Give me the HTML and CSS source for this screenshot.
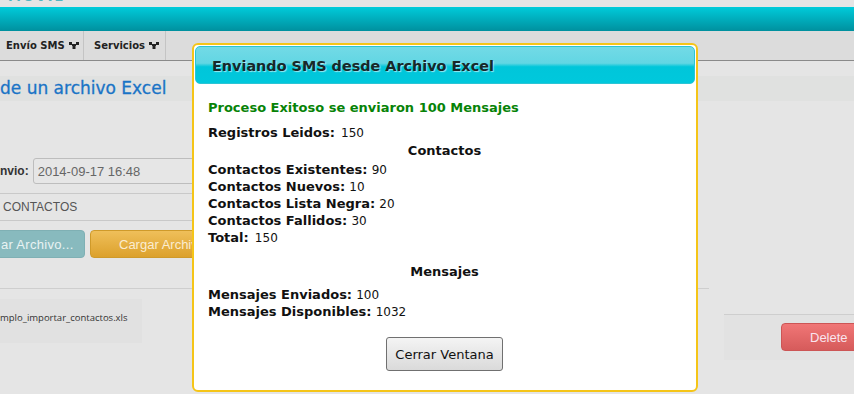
FILE: index.html
```html
<!DOCTYPE html>
<html lang="es">
<head>
  <meta charset="UTF-8" />
  <meta name="viewport" content="width=device-width, initial-scale=1.0"/>
  <title>Enviar SMS desde un archivo Excel</title>
  <link rel="stylesheet" href="styles.css">
</head>
<body>

  <div class="brand"><span>MOVIL</span></div>
  <div class="topbar"></div>

  <nav class="menu">
    <a class="menu-item">Envío SMS
      <svg class="caret" width="10" height="7" viewBox="0 0 10 7"><rect x="0" y="0" width="3" height="3"/><rect x="7" y="0" width="3" height="3"/><rect x="3" y="2" width="4" height="2"/><rect x="3.5" y="4" width="3" height="3"/></svg>
    </a>
    <a class="menu-item">Servicios
      <svg class="caret" width="10" height="7" viewBox="0 0 10 7"><rect x="0" y="0" width="3" height="3"/><rect x="7" y="0" width="3" height="3"/><rect x="3" y="2" width="4" height="2"/><rect x="3.5" y="4" width="3" height="3"/></svg>
    </a>
  </nav>

  <h2 class="page-title">de un archivo Excel</h2>

  <div class="form">
    <div class="field-row">
      <label>nvio:</label>
      <input class="field" type="text" value="2014-09-17 16:48">
    </div>
    <div class="section-row">CONTACTOS</div>
    <div class="button-row">
      <button class="btn btn-teal">ar Archivo...</button>
      <button class="btn btn-orange">Cargar Archivo</button>
    </div>
  </div>

  <div class="files">
    <div class="file-list">
      <div class="file-item">mplo_importar_contactos.xls</div>
    </div>
    <div class="file-actions">
      <button class="btn btn-red">Delete</button>
    </div>
  </div>

  <div class="modal">
    <div class="modal-header">Enviando SMS desde Archivo Excel</div>
    <div class="modal-body">
      <p class="success">Proceso Exitoso se enviaron 100 Mensajes</p>
      <p class="row"><b>Registros Leidos:</b> <span class="val wide">150</span></p>

      <h4 class="group first">Contactos</h4>
      <p class="row"><b>Contactos Existentes:</b> <span class="val">90</span></p>
      <p class="row"><b>Contactos Nuevos:</b> <span class="val">10</span></p>
      <p class="row"><b>Contactos Lista Negra:</b> <span class="val">20</span></p>
      <p class="row"><b>Contactos Fallidos:</b> <span class="val">30</span></p>
      <p class="row"><b>Total:</b> <span class="val wide">150</span></p>

      <h4 class="group">Mensajes</h4>
      <p class="row"><b>Mensajes Enviados:</b> <span class="val">100</span></p>
      <p class="row"><b>Mensajes Disponibles:</b> <span class="val">1032</span></p>

      <div class="modal-footer">
        <button class="btn-close">Cerrar Ventana</button>
      </div>
    </div>
  </div>

</body>
</html>
```

FILE: styles.css
```css
body {
  margin: 0;
  padding: 0;
  width: 854px;
  height: 394px;
  overflow: hidden;
  position: relative;
  background-color: #e5e5e5;
  font-family: "DejaVu Sans", Verdana, sans-serif;
}

.brand {
  height: 7px;
  overflow: hidden;
  padding-left: 8px;
}
.brand span {
  display: block;
  margin-top: -11px;
  font-size: 13px;
  font-weight: bold;
  letter-spacing: 2px;
  color: #4fb6c3;
}

.topbar {
  height: 24px;
  background: linear-gradient(to bottom, #00cbda, #00909e);
}

.menu {
  display: flex;
  height: 29px;
  background-color: #dcdcdc;
  border-bottom: 1px solid #8a8a8a;
}
.menu-item {
  box-sizing: border-box;
  display: flex;
  align-items: center;
  gap: 4px;
  width: 84px;
  padding-left: 6px;
  white-space: nowrap;
  font-size: 10px;
  font-weight: bold;
  color: #222;
  border-right: 1px solid #c4c4c4;
}
.menu-item + .menu-item {
  width: 82px;
  padding-left: 10px;
}
.caret {
  flex: none;
  fill: #222;
}

.page-title {
  margin: 15px 0 0 0;
  height: 25px;
  line-height: 25px;
  background-color: #e0e1e0;
  font-size: 17px;
  font-weight: normal;
  color: #1a74c6;
  -webkit-text-stroke: 0.3px #1a74c6;
}

.form {
  width: 600px;
}
.field-row {
  display: flex;
  align-items: center;
  gap: 4px;
  margin-top: 57px;
}
.field-row label {
  font-family: "Liberation Sans", Arial, sans-serif;
  font-size: 12px;
  font-weight: bold;
  color: #333;
}
.field {
  box-sizing: border-box;
  width: 220px;
  height: 26px;
  padding: 0 4px;
  border: 1px solid #bdbdbd;
  border-radius: 3px;
  background-color: #e6e6e6;
  font-family: "Liberation Sans", Arial, sans-serif;
  font-size: 13px;
  color: #666;
}

.section-row {
  margin-top: 9px;
  height: 26px;
  line-height: 26px;
  padding-left: 3px;
  border-top: 1px solid #c9c9c9;
  border-bottom: 1px solid #c9c9c9;
  font-family: "Liberation Sans", Arial, sans-serif;
  font-size: 12px;
  color: #555;
}

.button-row {
  display: flex;
  gap: 5px;
  margin-top: 9px;
}
.btn {
  box-sizing: border-box;
  height: 28px;
  border-radius: 4px;
  font-family: "Liberation Sans", Arial, sans-serif;
  font-size: 13px;
  text-align: left;
  cursor: pointer;
}
.btn-teal {
  margin-left: -20px;
  width: 105px;
  padding-left: 20px;
  border: 1px solid #7fb0b4;
  background-color: #88babe;
  color: #e9f3f3;
  letter-spacing: 0.3px;
}
.btn-orange {
  width: 160px;
  padding-left: 28px;
  border: 1px solid #cf9a2a;
  background: linear-gradient(to bottom, #efbf5a, #dca12c);
  color: #fbecd0;
}

.files {
  display: flex;
  margin-top: 30px;
}
.file-list {
  width: 709px;
  border-top: 1px solid #cecece;
}
.file-item {
  margin-top: 10px;
  width: 142px;
  height: 44px;
  box-sizing: border-box;
  padding-top: 12px;
  line-height: 13px;
  background-color: #e1e1e1;
  font-family: "Open Sans", sans-serif;
  font-size: 9.5px;
  color: #333;
}
.file-actions {
  flex: 1;
  display: flex;
  justify-content: flex-end;
  align-items: flex-start;
  margin: 26px 0 0 15px;
  height: 45px;
  border-top: 1px solid #cecece;
  background-color: #e2e2e2;
}
.btn-red {
  margin-top: 8px;
  margin-right: -17px;
  width: 90px;
  padding-left: 28px;
  border: 1px solid #cc5555;
  background: linear-gradient(to bottom, #f07676, #d65b5b);
  color: #f9e4ee;
}

/* dialog */
.modal {
  position: absolute;
  left: 192px;
  top: 43px;
  width: 506px;
  height: 349px;
  box-sizing: border-box;
  padding: 1px;
  border: 2px solid #f5c518;
  border-radius: 6px;
  background-color: #fff;
}
.modal-header {
  height: 38px;
  box-sizing: border-box;
  padding-left: 16px;
  line-height: 38px;
  border: 1px solid #2cc4d4;
  border-radius: 5px;
  background: linear-gradient(to bottom, #72dae6 0%, #62d6e3 45%, #00c6da 55%, #00c8dc 100%);
  font-size: 14.4px;
  font-weight: bold;
  color: #17282a;
  text-shadow: 1px 1px 1px rgba(255, 255, 255, 0.6);
}
.modal-body {
  padding: 15px 14px 0 13px;
  font-size: 13px;
  line-height: 17px;
  color: #111;
}
.modal-body p,
.modal-body h4 {
  margin: 0;
  height: 17px;
}
.success {
  margin-bottom: 8px !important;
  font-weight: bold;
  color: #078307;
}
.row b {
  color: #111;
}
.val {
  font-size: 12px;
  line-height: 1;
}
.val.wide {
  padding-left: 2px;
}
.group {
  margin-top: 17px !important;
  margin-bottom: 6px !important;
  text-align: center;
  font-size: 13px;
}
.group.first {
  margin-top: 1px !important;
  margin-bottom: 2px !important;
}
.modal-footer {
  margin-top: 17px;
  text-align: center;
}
.btn-close {
  height: 34px;
  padding: 0 8px;
  border: 1px solid #707070;
  border-radius: 3px;
  background: linear-gradient(to bottom, #f4f4f4, #dadada);
  font-family: "DejaVu Sans", Verdana, sans-serif;
  font-size: 13px;
  color: #111;
}
```
